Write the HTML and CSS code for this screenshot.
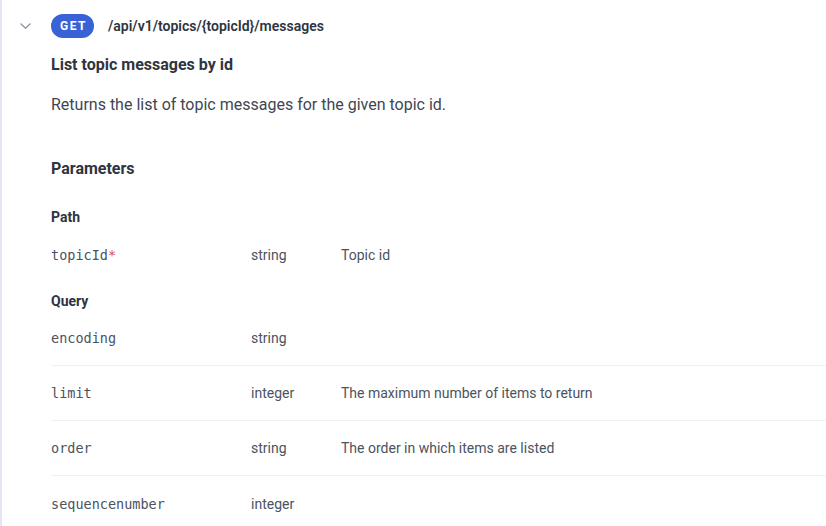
FILE: index.html
```html
<!DOCTYPE html>
<html>
<head>
<meta charset="utf-8">
<link rel="stylesheet" href="styles.css">
</head>
<body>
<div class="panel">
  <div class="op-head">
    <span class="chev"><svg width="11" height="6" viewBox="0 0 11 6"><path d="M0.5 0.5 L5.5 5.3 L10.5 0.5" fill="none" stroke="#8a93a4" stroke-width="1.2"/></svg></span>
    <span class="badge">GET</span>
    <span class="path">/api/v1/topics/{topicId}/messages</span>
  </div>
  <div class="body">
    <h2 class="title">List topic messages by id</h2>
    <p class="desc">Returns the list of topic messages for the given topic id.</p>
    <h3 class="params">Parameters</h3>
    <div class="group">
      <div class="group-label">Path</div>
      <div class="row">
        <span class="name">topicId<span class="req">*</span></span>
        <span class="type">string</span>
        <span class="pdesc">Topic id</span>
      </div>
    </div>
    <div class="group">
      <div class="group-label">Query</div>
      <div class="row">
        <span class="name">encoding</span>
        <span class="type">string</span>
        <span class="pdesc"></span>
      </div>
      <div class="row">
        <span class="name">limit</span>
        <span class="type">integer</span>
        <span class="pdesc">The maximum number of items to return</span>
      </div>
      <div class="row">
        <span class="name">order</span>
        <span class="type">string</span>
        <span class="pdesc">The order in which items are listed</span>
      </div>
      <div class="row">
        <span class="name">sequencenumber</span>
        <span class="type">integer</span>
        <span class="pdesc"></span>
      </div>
    </div>
  </div>
</div>
</body>
</html>
```
FILE: styles.css
```css
html, body {
  margin: 0;
  padding: 0;
  background: #ffffff;
}
body {
  font-family: Roboto, "Liberation Sans", sans-serif;
  color: #3f4653;
  overflow: hidden;
}
.panel {
  border-left: 2px solid #e4e7f1;
  min-height: 526px;
  box-sizing: border-box;
}
.op-head {
  height: 50px;
  padding-top: 1px;
  box-sizing: border-box;
  display: flex;
  align-items: center;
}
.chev {
  width: 11px;
  height: 6px;
  margin-left: 18px;
  display: flex;
}
.chev svg { display: block; }
.badge {
  margin-left: 20px;
  width: 43px;
  height: 24px;
  border-radius: 12px;
  background: #3862d6;
  color: #ffffff;
  font-size: 12px;
  font-weight: 700;
  letter-spacing: 1.5px;
  display: flex;
  align-items: center;
  justify-content: center;
  box-sizing: border-box;
  padding-left: 2px;
}
.path {
  margin-left: 14px;
  font-size: 14px;
  font-weight: 600;
  color: #2e3440;
}
.body {
  padding-left: 49px;
}
.title {
  margin: 5px 0 0;
  font-size: 16px;
  line-height: 20px;
  font-weight: 700;
  color: #2e3440;
}
.desc {
  margin: 19px 0 0;
  font-size: 16px;
  line-height: 22px;
  color: #3f4653;
}
.params {
  margin: 41px 0 0;
  font-size: 16px;
  line-height: 24px;
  font-weight: 700;
  color: #2e3440;
}
.group-label {
  font-size: 14px;
  line-height: 20px;
  font-weight: 700;
  color: #2e3440;
}
.params + .group { margin-top: 26px; }
.group + .group { margin-top: 9px; }
.row {
  display: grid;
  grid-template-columns: 200px 90px 1fr;
  align-items: center;
  height: 55px;
  box-sizing: border-box;
  border-bottom: 1px solid #f0f1f3;
  font-size: 14px;
}
.row:last-child { border-bottom: none; }
.name {
  font-family: "DejaVu Sans Mono", monospace;
  font-size: 13.5px;
  color: #4b5361;
}
.req { color: #d9534f; }
.type, .pdesc {
  color: #4b5361;
}
```
